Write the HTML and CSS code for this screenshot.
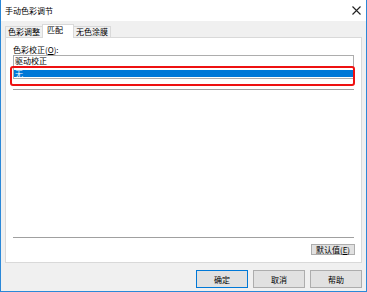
FILE: index.html
```html
<!DOCTYPE html>
<html lang="zh">
<head>
    <meta charset="UTF-8">
    <title>手动色彩调节</title>
    <link rel="stylesheet" href="styles.css">
</head>
<body>
    <div class="window">
        <div class="titlebar">
            <span class="title">手动色彩调节</span>
            <svg class="close" width="9" height="9" viewBox="0 0 9 9">
                <path d="M0.5 0.5 L8.5 8.5 M8.5 0.5 L0.5 8.5" stroke="#222" stroke-width="1.1" fill="none"/>
            </svg>
        </div>
        <div class="content">
            <ul class="tabs">
                <li class="tab">色彩调整</li>
                <li class="tab active">匹配</li>
                <li class="tab">无色涂膜</li>
            </ul>
            <div class="panel">
                <div class="label">色彩校正(<u>O</u>):</div>
                <div class="listbox">
                    <div class="item">驱动校正</div>
                    <div class="item selected">无</div>
                    <!-- 红色标注框 -->
                    <div class="highlight"></div>
                </div>
                <div class="rule top-rule"></div>
                <div class="spacer"></div>
                <div class="rule"></div>
                <div class="panel-actions">
                    <button class="btn small">默认值(<u>E</u>)</button>
                </div>
            </div>
            <div class="footer">
                <button class="btn default">确定</button>
                <button class="btn">取消</button>
                <button class="btn">帮助</button>
            </div>
        </div>
    </div>
</body>
</html>
```

FILE: styles.css
```css
body {
    margin: 0;
    padding: 0;
    font-family: "Noto Sans CJK SC", "Noto Sans", sans-serif;
    font-size: 8px;
    color: #000000;
}

.window {
    width: 367px;
    height: 292px;
    box-sizing: border-box;
    border: 1px solid #2b88d8;
    border-top: none;
    display: flex;
    flex-direction: column;
    background-color: #f0f0f0;
}

.titlebar {
    height: 21px;
    flex: none;
    background-color: #ffffff;
    display: flex;
    align-items: center;
    justify-content: space-between;
    padding: 0 4px 1px 4px;
    box-sizing: border-box;
}

.close {
    margin-right: 1px;
}

.content {
    flex: 1;
    display: flex;
    flex-direction: column;
    padding: 3px 4px 3px 4px;
}

.tabs {
    list-style-type: none;
    margin: 0;
    padding: 0;
    display: flex;
    align-items: flex-end;
    height: 13px;
    position: relative;
    z-index: 1;
}

.tab {
    height: 10px;
    line-height: 10px;
    padding: 0 2px;
    border: 1px solid #d9d9d9;
    border-bottom: none;
    background-color: #f0f0f0;
    margin-left: -1px;
}

.tab:first-child {
    margin-left: 0;
}

.tab.active {
    height: 13px;
    line-height: 10px;
    background-color: #ffffff;
    padding: 0 10px 0 4px;
    border-color: #d9d9d9;
    margin-bottom: -1px;
}

.panel {
    height: 226px;
    box-sizing: border-box;
    background-color: #ffffff;
    border: 1px solid #d9d9d9;
    padding: 6px 7px 7px 7px;
    display: flex;
    flex-direction: column;
}

.label {
    line-height: 11px;
}

.label u,
.btn u {
    text-decoration: underline;
}

.listbox {
    position: relative;
    border: 1px solid #adadad;
    height: 24px;
    box-sizing: border-box;
}

.item {
    line-height: 10px;
    height: 14px;
    padding-left: 1px;
}

.item.selected {
    height: 7px;
    line-height: 7px;
    background-color: #0078d7;
    color: #ffffff;
}

.highlight {
    position: absolute;
    left: -4px;
    top: 10px;
    width: 345px;
    height: 20px;
    box-sizing: border-box;
    border: 2px solid #ee1111;
    border-radius: 3px;
}

.rule {
    height: 1px;
    background-color: #a0a0a0;
}

.top-rule {
    margin-top: 10px;
}

.spacer {
    flex: 1;
}

.panel-actions {
    display: flex;
    justify-content: flex-end;
    margin-top: 6px;
}

.btn {
    font-family: "Noto Sans CJK SC", "Noto Sans", sans-serif;
    font-size: 8px;
    color: #000000;
    background-color: #e1e1e1;
    border: 1px solid #adadad;
    width: 52px;
    height: 18px;
    padding: 0;
    margin: 0;
}

.btn.small {
    width: 44px;
    height: 11px;
    line-height: 9px;
    margin-right: -1px;
}

.btn.default {
    border: 1px solid #0078d7;
}

.footer {
    display: flex;
    justify-content: flex-end;
    gap: 5px;
    margin-top: 7px;
}
```
